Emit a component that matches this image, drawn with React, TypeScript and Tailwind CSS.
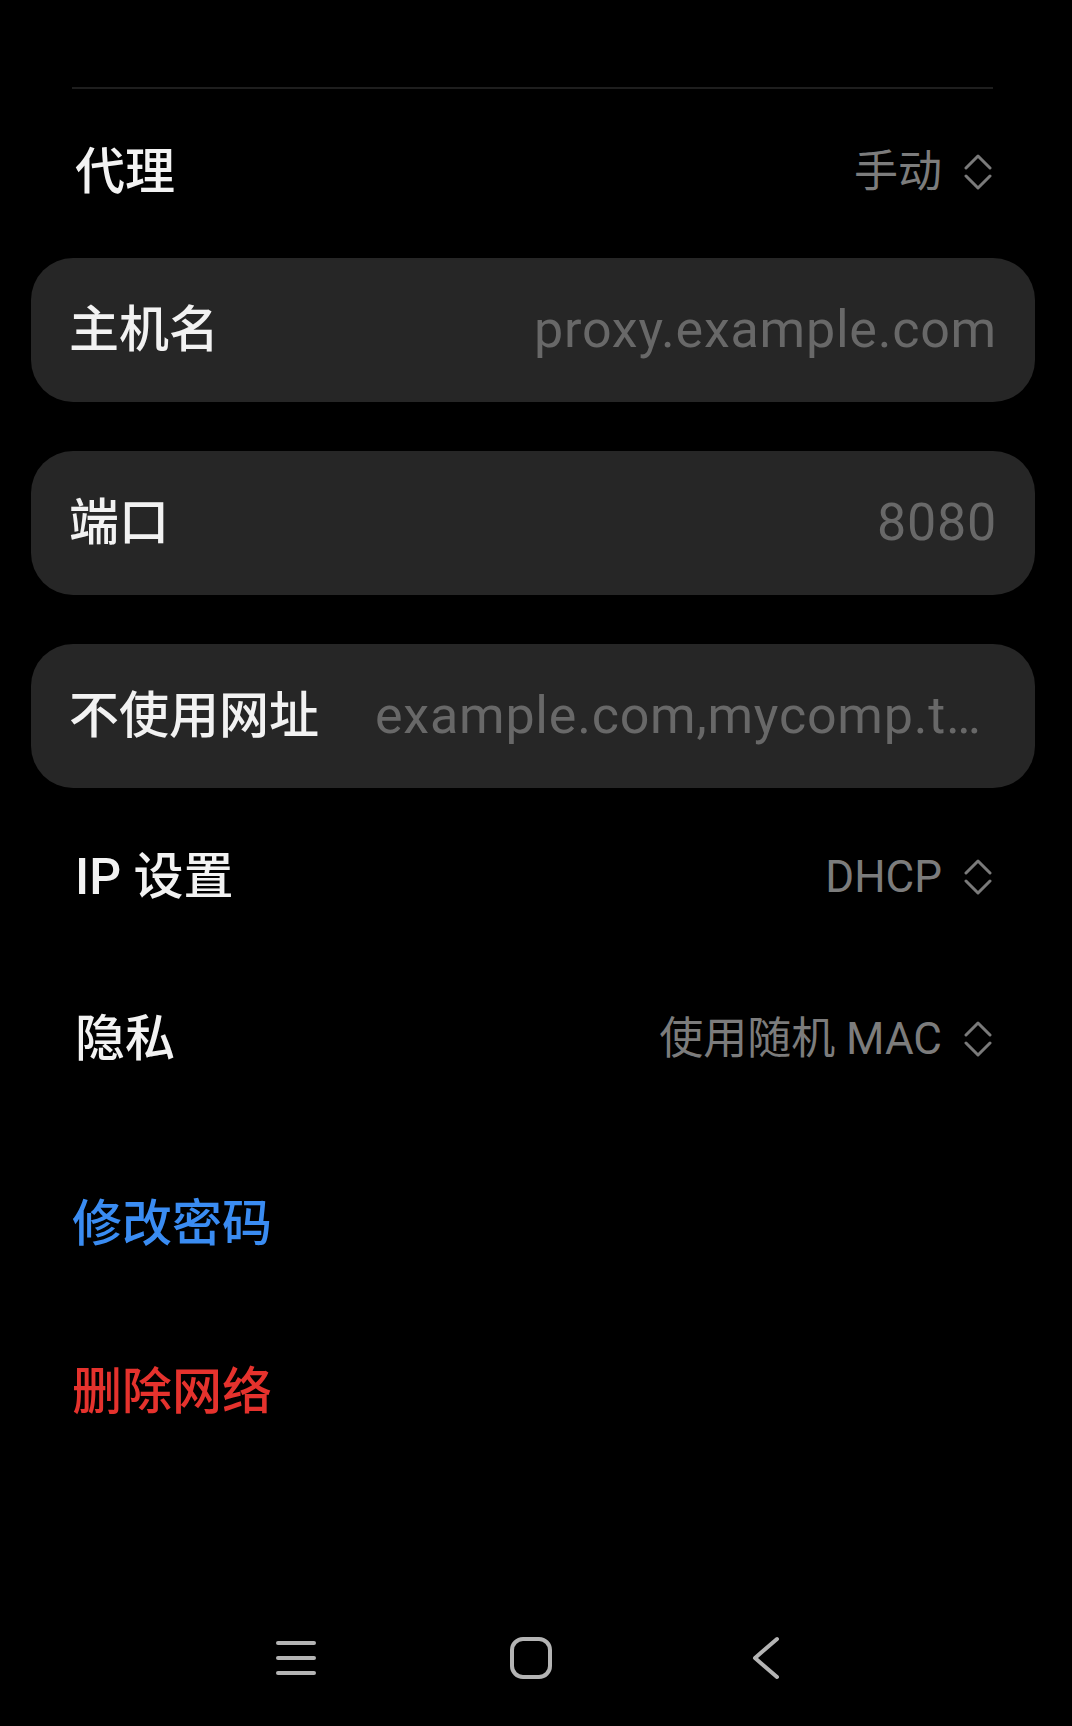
import React from 'react';

const font = { fontFamily: 'Roboto, "Noto Sans CJK SC", sans-serif' };

const UpDown = () => (
  <svg width="28" height="38" viewBox="0 0 28 38" fill="none" stroke="#7a7a7a" strokeWidth="3" strokeLinecap="round" strokeLinejoin="round">
    <path d="M2 15 L14 3 L26 15" />
    <path d="M2 23 L14 35 L26 23" />
  </svg>
);

const SelectRow = ({ label, value, className }: { label: string; value: string; className: string }) => (
  <div className={`flex items-center justify-between pl-[75px] pr-[80px] ${className}`}>
    <span className="text-[50px] leading-none text-[#f2f2f2] font-medium">{label}</span>
    <div className="flex items-center">
      <span className="text-[44px] leading-none text-[#7c7c7c]">{value}</span>
      <span className="ml-[22px] flex">
        <UpDown />
      </span>
    </div>
  </div>
);

const FieldCard = ({ label, value, className }: { label: string; value: string; className: string }) => (
  <div className={`ml-[31px] w-[1004px] h-[144px] rounded-[42px] bg-[#262626] flex items-center pl-[38px] pr-[38px] ${className}`}>
    <span className="shrink-0 text-[50px] leading-none text-[#f2f2f2] font-medium">{label}</span>
    <span className="ml-[56px] flex-1 min-w-0 truncate text-right text-[52px] leading-[62px] tracking-[0.015em] text-[#686868]">
      {value}
    </span>
  </div>
);

const ActionRow = ({ label, color }: { label: string; color: string }) => (
  <div className="h-[168px] flex items-center pl-[72px]">
    <span className={`text-[50px] leading-none font-medium ${color}`}>{label}</span>
  </div>
);

export default function App() {
  return (
    <div className="w-[1072px] h-[1726px] bg-black flex flex-col overflow-hidden" style={font}>
      <div className="mt-[87px] ml-[72px] w-[921px] h-[2px] bg-[#1e1e1e]" />

      <SelectRow label="代理" value="手动" className="h-[165px]" />

      <FieldCard label="主机名" value="proxy.example.com" className="mt-[4px]" />
      <FieldCard label="端口" value="8080" className="mt-[49px]" />
      <FieldCard label="不使用网址" value="example.com,mycomp.test.com,localhost" className="mt-[49px]" />

      <SelectRow label="IP 设置" value="DHCP" className="mt-[8px] h-[162px]" />
      <SelectRow label="隐私" value="使用随机 MAC" className="h-[162px]" />

      <div className="mt-[20px]">
        <ActionRow label="修改密码" color="text-[#3a8cf2]" />
        <ActionRow label="删除网络" color="text-[#e5322d]" />
      </div>

      <div className="mt-[134px] h-[96px] flex items-center pl-[236px] gap-[115px]">
        <div className="w-[120px] flex justify-center">
          <svg width="42" height="36" viewBox="0 0 42 36" fill="none" stroke="#b4b4b4" strokeWidth="4" strokeLinecap="round">
            <path d="M3 3 H39" />
            <path d="M3 18 H39" />
            <path d="M3 33 H39" />
          </svg>
        </div>
        <div className="w-[120px] flex justify-center">
          <svg width="44" height="44" viewBox="0 0 44 44" fill="none" stroke="#b4b4b4" strokeWidth="4">
            <rect x="3" y="3" width="38" height="38" rx="11" />
          </svg>
        </div>
        <div className="w-[120px] flex justify-center">
          <svg width="30" height="44" viewBox="0 0 30 44" fill="none" stroke="#b4b4b4" strokeWidth="4" strokeLinecap="round" strokeLinejoin="round">
            <path d="M26 3 L4 22 L26 41" />
          </svg>
        </div>
      </div>
    </div>
  );
}
